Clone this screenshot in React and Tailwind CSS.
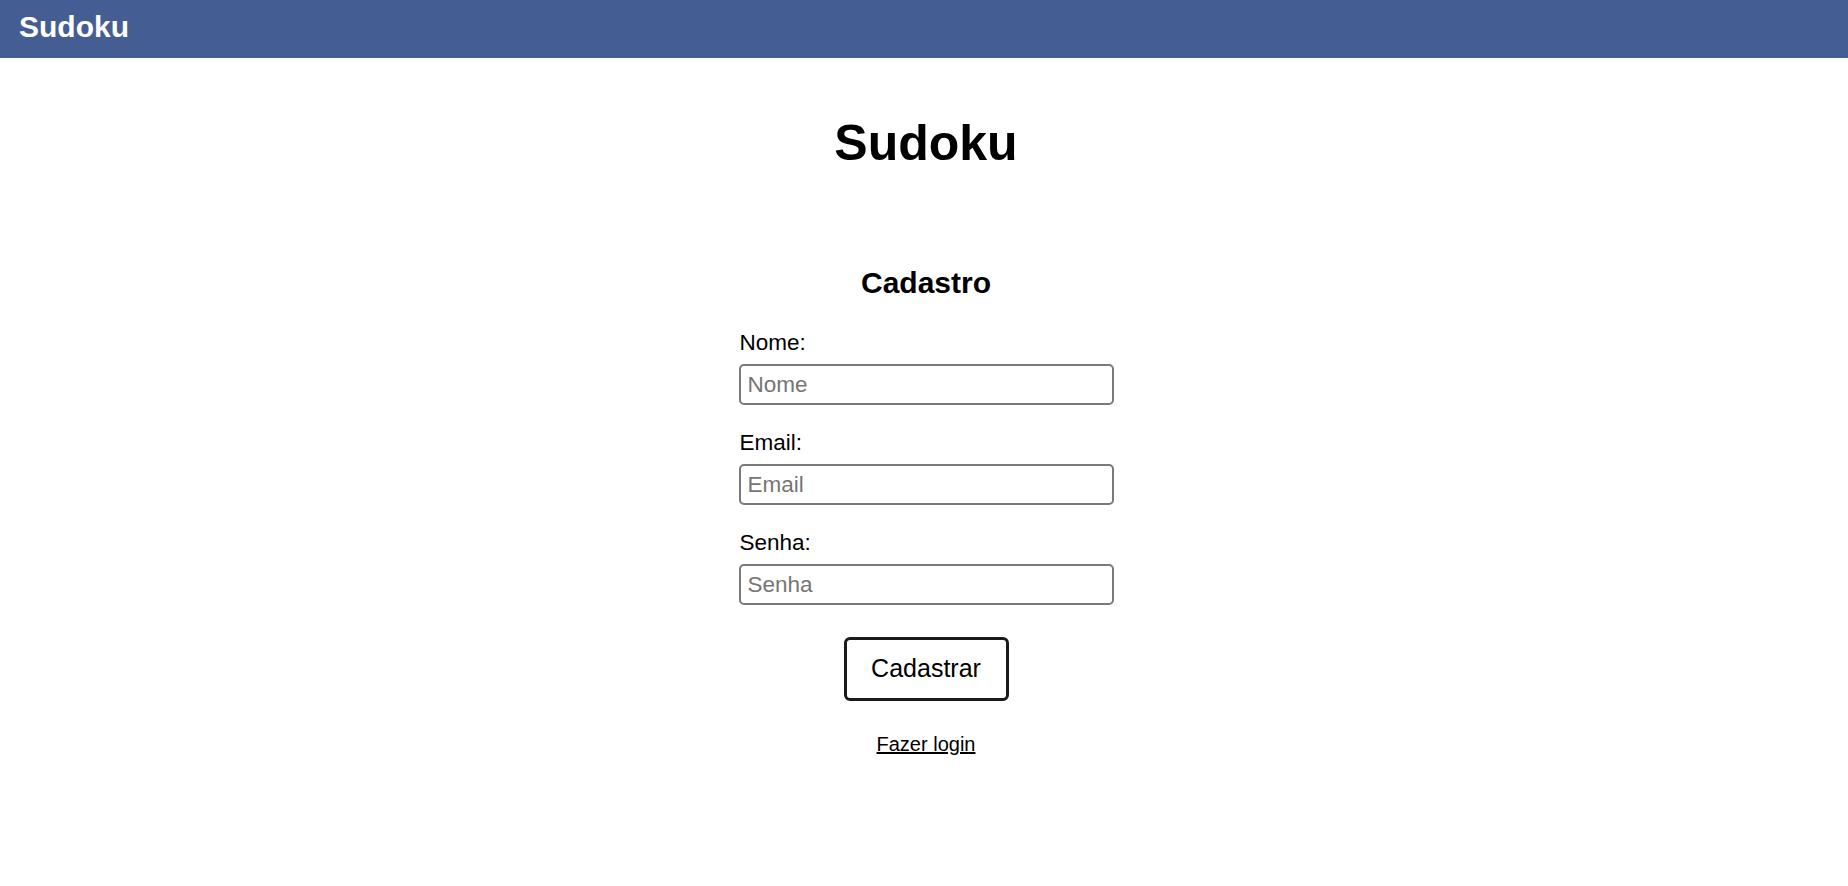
import { useState } from "react";

const Field = ({ label, type, value, onChange }) => (
  <div className="flex flex-col">
    <label className="text-[22.5px] leading-[26px] text-black pl-px">{label}:</label>
    <input
      type={type}
      value={value}
      onChange={onChange}
      placeholder={label}
      className="mt-2 h-[41px] w-full rounded-[5px] border-2 border-[#7a7a7a] bg-white px-[7px] text-[22.5px] text-black outline-none placeholder:text-[#757575]"
    />
  </div>
);

const App = () => {
  const [form, setForm] = useState({ nome: "", email: "", senha: "" });

  const set = (key) => (e) => setForm({ ...form, [key]: e.target.value });

  return (
    <div className="min-h-screen bg-white font-['Liberation_Sans',Arial,sans-serif] text-black">
      <header className="h-[58px] bg-[#445d93] pl-[19px] pt-[10px]">
        <h1 className="text-[30px] leading-[34px] font-bold text-white">Sudoku</h1>
      </header>

      <main className="flex flex-col items-center pl-[4px]">
        <h1 className="mt-[56px] text-[50px] leading-[58px] font-bold">Sudoku</h1>

        <h2 className="mt-[94px] text-[30px] leading-[34px] font-bold">Cadastro</h2>

        <form
          onSubmit={(e) => e.preventDefault()}
          className="mt-[30px] flex w-[375px] flex-col gap-[25px]"
        >
          <Field label="Nome" type="text" value={form.nome} onChange={set("nome")} />
          <Field label="Email" type="email" value={form.email} onChange={set("email")} />
          <Field label="Senha" type="password" value={form.senha} onChange={set("senha")} />
        </form>

        <button
          type="submit"
          className="mt-[32px] h-[64px] w-[165px] rounded-[6px] border-[3px] border-[#1a1a1a] bg-white text-[25px] text-black"
        >
          Cadastrar
        </button>

        <a href="#" className="mt-[31px] text-[20px] leading-[24px] text-black underline">
          Fazer login
        </a>
      </main>
    </div>
  );
};

export default App;
